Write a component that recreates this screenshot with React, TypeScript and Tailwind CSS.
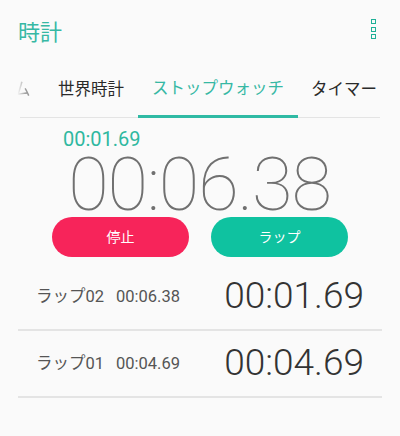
export default function App() {
  const jp = "font-['Roboto','Noto_Sans_CJK_JP',sans-serif]";
  return (
    <div className={`w-[400px] h-[436px] bg-[#fafafa] overflow-hidden flex flex-col ${jp}`}>
      <div className="h-[65px] flex items-start justify-between pl-[18px] pr-[24px] pt-[16px]">
        <span className="text-[22px] leading-[33px] text-[#36b8a4]">時計</span>
        <div className="flex flex-col gap-[2.5px] mt-[3px]">
          <span className="block w-[5px] h-[5px] border border-[#1fb097]" />
          <span className="block w-[5px] h-[5px] border border-[#1fb097]" />
          <span className="block w-[5px] h-[5px] border border-[#1fb097]" />
        </div>
      </div>
      <div className="mx-[20px] w-[360px] h-[53px] flex border-b border-[#e4e4e4]">
        <div className="w-[38px] flex justify-start items-center h-[52px] pb-[2px]">
          <span className="text-[16.5px] text-[#999999] -ml-[6px] [mask-image:linear-gradient(to_right,transparent_20%,black_70%)]">ム</span>
        </div>
        <div className="w-[80px] flex items-center h-[52px] pb-[2px] text-[16.5px] text-[#2a2a2a]">世界時計</div>
        <div className="w-[160px] flex items-center justify-center h-[53px] pt-[1px] pb-[2px] text-[16.5px] text-[#36b8a4] border-b-[3px] border-[#2fbaa4]">ストップウォッチ</div>
        <div className="flex-1 flex items-center justify-end pb-[2px] h-[52px] text-[16.5px] text-[#2a2a2a] whitespace-nowrap pr-[3px]">タイマー</div>
      </div>
      <div className="pl-[63px] mt-[9px] text-[20px] leading-[24px] text-[#2fb8a0]">00:01.69</div>
      <div className="text-center text-[74px] leading-[68px] font-thin text-[#707070] h-[65px] whitespace-nowrap tracking-[-1.2px] -ml-[1px]">00:06.38</div>
      <div className="flex justify-between px-[52px] mt-[1px]">
        <div className="w-[137px] h-[40px] rounded-full bg-[#f7245a] text-white text-[14px] flex items-center justify-center">停止</div>
        <div className="w-[137px] h-[40px] rounded-full bg-[#0fc2a0] text-white text-[14px] flex items-center justify-center">ラップ</div>
      </div>
      <div className="mx-[18px] mt-[7px] h-[67px] flex items-center border-b-[2px] border-[#e4e4e4]">
        <span className="ml-[18px] pt-[2px] w-[80px] text-[16.5px] text-[#555555]">ラップ02</span>
        <span className="pt-[2px] text-[16.5px] text-[#555555]">00:06.38</span>
        <span className="ml-auto mr-[18px] text-[37px] font-light text-[#333333] -mt-[2px]">00:01.69</span>
      </div>
      <div className="mx-[18px] h-[67px] flex items-center border-b-[2px] border-[#e4e4e4]">
        <span className="ml-[18px] pt-[2px] w-[80px] text-[16.5px] text-[#555555]">ラップ01</span>
        <span className="pt-[2px] text-[16.5px] text-[#555555]">00:04.69</span>
        <span className="ml-auto mr-[18px] text-[37px] font-light text-[#333333] -mt-[2px]">00:04.69</span>
      </div>
    </div>
  );
}
